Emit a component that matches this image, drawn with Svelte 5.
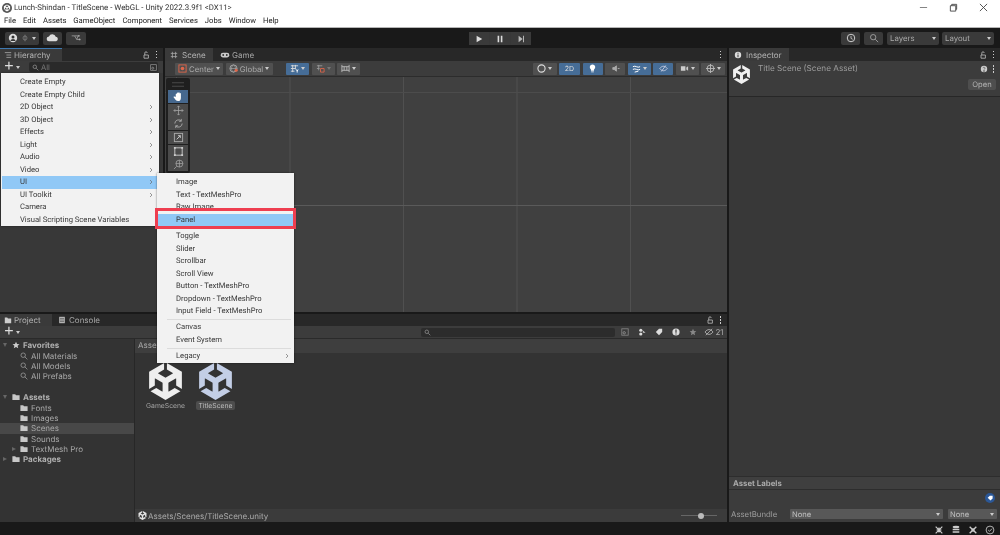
<script>
  const unity = "m12.9288 4.2939 3.7997 2.1929c.1366.077.1415.2905 0 .3675l-4.515 2.6076a.4192.4192 0 0 1-.4246 0L7.274 6.8543c-.1415-.077-.1415-.2905 0-.3675l3.7972-2.1929V0L1.3758 5.5977V16.793l3.7-2.1358v-4.3884c-.0025-.1585.1794-.2733.3159-.1843l4.515 2.6076a.4316.4316 0 0 1 .2123.3675v5.2124c.0049.1585-.1794.2733-.3184.1843l-3.7972-2.1929-3.7 2.1358 9.6957 5.5977 9.6957-5.5977-3.7-2.1358-3.7972 2.1929c-.1366.0842-.3233-.0234-.3184-.1843v-5.2124c0-.1515.0843-.2921.2123-.3675l4.5151-2.6076c.1342-.0843.3208.0258.3159.1843v4.3884l3.7 2.1358V5.5977L12.9288 0Z";
  const menus = ["File","Edit","Assets","GameObject","Component","Services","Jobs","Window","Help"];
  const hierarchy = [
    ["Create Empty",0],["Create Empty Child",0],["2D Object",1],["3D Object",1],["Effects",1],["Light",1],["Audio",1],["Video",1],["UI",1,1],["UI Toolkit",1],["Camera",0],["Visual Scripting Scene Variables",0]
  ];
  const tree = [
    {t:"Favorites",k:"head star"},{t:"All Materials",k:"search"},{t:"All Models",k:"search"},{t:"All Prefabs",k:"search"},{k:"gap"},
    {t:"Assets",k:"head expanded"},{t:"Fonts",k:"folder"},{t:"Images",k:"folder"},{t:"Scenes",k:"folder sel"},{t:"Sounds",k:"folder"},{t:"TextMesh Pro",k:"folder arrow"},{t:"Packages",k:"head closed"}
  ];
</script>

<div class="app">
  <header class="title">
    <svg class="appicon" viewBox="0 0 24 24"><circle cx="12" cy="12" r="12" fill="#555"/><path d={unity} fill="#fff" transform="translate(3.6 3.6) scale(.7)"/></svg>
    <span>Lunch-Shindan - TitleScene - WebGL - Unity 2022.3.9f1 &lt;DX11&gt;</span>
    <div class="winctl">
      <svg viewBox="0 0 10 10"><path d="M1 5h8" stroke="#777" fill="none"/></svg>
      <svg viewBox="0 0 10 10"><path d="M1.5 3h6v6h-6zM3 3V1.5h5.500V7H7.500" stroke="#444" fill="none"/></svg>
      <svg viewBox="0 0 10 10"><path d="M1 1l8 8M9 1l-8 8" stroke="#444" fill="none"/></svg>
    </div>
  </header>
  <nav class="menubar">{#each menus as m}<span>{m}</span>{/each}</nav>

  <div class="toolbar">
    <div class="tleft">
      <div class="tb acct">
        <svg viewBox="0 0 12 12"><circle cx="6" cy="6" r="5" fill="#ddd"/><circle cx="6" cy="4.700" r="1.800" fill="#333"/><path d="M2.800 9.500a3.300 3 0 0 1 6.400 0z" fill="#333"/></svg>
        <svg class="dim" viewBox="0 0 12 12"><circle cx="6" cy="6" r="3" fill="none" stroke="#888"/><path d="M6 1v10" stroke="#888"/></svg>
        <i class="caret"></i>
      </div>
      <div class="tb cloud"><svg viewBox="0 0 16 10"><path d="M4 9a3 3 0 0 1-.4-6A4.500 4.500 0 0 1 12 3.500 2.800 2.800 0 0 1 12.500 9z" fill="#ddd"/></svg></div>
      <div class="tb collab"><svg viewBox="0 0 14 10"><path d="M1 2h4l3 5h5M5 2h5M8 7l2-5" stroke="#aaa" fill="none"/><circle cx="11" cy="2" r="1.300" fill="#aaa"/><circle cx="12" cy="7" r="1.300" fill="#aaa"/></svg></div>
    </div>
    <div class="play">
      <span><svg viewBox="0 0 10 10"><path d="M2 1l7 4-7 4z" fill="#ddd"/></svg></span>
      <span><svg viewBox="0 0 10 10"><path d="M2 1h2v8H2zM6 1h2v8H6z" fill="#ddd"/></svg></span>
      <span><svg viewBox="0 0 10 10"><path d="M2 1l5 4-5 4zM7.500 1h1.200v8H7.500z" fill="#bbb"/></svg></span>
    </div>
    <div class="tright">
      <div class="tb hist"><svg viewBox="0 0 12 12"><circle cx="6" cy="6" r="4.500" fill="none" stroke="#ccc" stroke-width="1.200"/><path d="M6 3.500V6.500L8 7.500" stroke="#ccc" fill="none"/></svg></div>
      <div class="tb srch"><svg viewBox="0 0 12 12"><circle cx="5" cy="5" r="3.200" fill="none" stroke="#aaa"/><path d="M7.500 7.500L11 11" stroke="#aaa"/></svg></div>
      <div class="tb drop layers">Layers<i class="caret"></i></div>
      <div class="tb drop layout">Layout<i class="caret"></i></div>
    </div>
  </div>

  <div class="workspace">
    <div class="leftcol">
      <div class="toprow">
        <section class="hier">
          <div class="tabs">
            <div class="tab active blue"><svg viewBox="0 0 10 10"><path d="M1 2h8M3 5h6M3 8h6" stroke="#aaa"/></svg>Hierarchy</div>
            <div class="tabtools"><svg viewBox="0 0 10 10"><path d="M2.500 5h5.500v4H2.500zM3.500 5V2.500a1.500 1.500 0 0 1 3 0" stroke="#bbb" fill="none"/></svg><b class="dots"></b></div>
          </div>
          <div class="hbar">
            <span class="plus">+</span><i class="caret"></i>
            <div class="hsearch"><svg viewBox="0 0 10 10"><circle cx="4" cy="4" r="2.500" fill="none" stroke="#999"/><path d="M6 6l3 3" stroke="#999"/></svg>All
              <svg class="end" viewBox="0 0 10 10"><rect x="1" y="1" width="8" height="8" fill="none" stroke="#999"/><circle cx="4" cy="6" r="1.500" fill="none" stroke="#999"/></svg>
            </div>
          </div>
          <div class="hbody"></div>
        </section>

        <section class="scene">
          <div class="tabs">
            <div class="tab active sc"><svg viewBox="0 0 10 10"><path d="M3 1v8M7 1v8M1 3h8M1 7h8" stroke="#aaa"/></svg>Scene</div>
            <div class="tab gm"><svg viewBox="0 0 14 10"><rect x="1" y="2" width="12" height="6.500" rx="3" fill="#ccc"/><circle cx="4.500" cy="5" r="1.300" fill="#333"/><circle cx="9.500" cy="5" r="1.300" fill="#333"/></svg>Game</div>
            <div class="tabtools"><b class="dots"></b></div>
          </div>
          <div class="sbar">
            <div class="sb w-center"><svg viewBox="0 0 10 10"><rect x="1" y="1" width="8" height="8" fill="none" stroke="#e0664a"/><circle cx="5" cy="5" r="2" fill="#e0664a"/></svg>Center<i class="caret"></i></div>
            <div class="sb w-global"><svg viewBox="0 0 10 10"><circle cx="5" cy="5" r="4" fill="none" stroke="#aaa"/><path d="M1 5h8M5 1c-3 2-3 6 0 8M5 1c3 2 3 6 0 8" stroke="#aaa" fill="none" stroke-width=".7"/><circle cx="8" cy="7" r="1.700" fill="#e0664a"/></svg>Global<i class="caret"></i></div>
            <div class="sb w-snap on first"><svg viewBox="0 0 10 10"><path d="M1 2h8M1 5h5M1 8h4M3 1v8M6 1v5" stroke="#ddd"/><path d="M7 6l1 2 1-2M8 8v1.500" stroke="#fff" fill="none"/></svg><i class="caret"></i></div>
            <div class="sb w-snap2"><svg viewBox="0 0 10 10"><path d="M1 2h6M1 5h3M3 1v6" stroke="#999"/><path d="M5 5h4v4H5z" fill="none" stroke="#d9644a"/></svg><i class="caret dimc"></i></div>
            <div class="sb w-snap2"><svg viewBox="0 0 10 10"><path d="M1 1v8M9 1v8M1 3h8M1 7h8M3.500 3v4M6.500 3v4" stroke="#bbb"/></svg><i class="caret"></i></div>
            <div class="spacer"></div>
            <div class="sb w-wide"><svg viewBox="0 0 10 10"><circle cx="5" cy="5" r="4" fill="none" stroke="#ddd" stroke-width="1.200"/></svg><i class="caret"></i></div>
            <div class="sb w-2d on">2D</div>
            <div class="sb w-btn on"><svg viewBox="0 0 10 10"><path d="M5 .5a3 3 0 0 1 1.700 5.500v1.500H3.300V6A3 3 0 0 1 5 .5zM3.500 8.300h3v1h-3z" fill="#fff"/></svg></div>
            <div class="sb w-btn"><svg viewBox="0 0 10 10"><path d="M2 4h1.500L6 2v6L3.500 6H2zM7.500 5h2" stroke="#aaa" fill="#aaa"/></svg></div>
            <div class="sb w-fx on"><svg viewBox="0 0 10 10"><path d="M1 3c3-2 5 2 8 0M1 6c3-2 5 2 8 0M3 9l4-1" stroke="#fff" fill="none" stroke-width="1.100"/></svg><i class="caret"></i></div>
            <div class="sb w-btn on"><svg viewBox="0 0 12 10"><path d="M1 5c3-4 7-4 10 0-3 4-7 4-10 0zM3 9L9 1" stroke="#dde" fill="none"/></svg></div>
            <div class="sb w-fx"><svg viewBox="0 0 10 10"><path d="M1 2.500h5v5H1zM7 4l2-1.500v5L7 6z" fill="#ccc"/></svg><i class="caret"></i></div>
            <div class="sb w-wide"><svg viewBox="0 0 10 10"><circle cx="5" cy="5" r="3.800" fill="none" stroke="#bbb"/><path d="M0 5h10M5 0v10" stroke="#bbb"/></svg><i class="caret"></i></div>
          </div>
          <div class="view">
            <div class="tools">
              <div class="grip"></div>
              <div class="tool on"><svg viewBox="0 0 12 12"><path d="M3 6V3.500a.7.7 0 0 1 1.400 0V2.300a.7.7 0 0 1 1.400 0V2a.7.7 0 0 1 1.400 0v1a.7.7 0 0 1 1.400 0v4.500c0 2-1 3.500-3 3.500-2.500 0-3-2-4.800-4-.6-1 .8-1.500 1.700-.500z" fill="#fff"/></svg></div>
              <div class="tool"><svg viewBox="0 0 12 12"><path d="M6 1v10M1 6h10M4.500 2.500L6 1l1.500 1.500M4.500 9.500L6 11l1.500-1.500M2.500 4.500L1 6l1.500 1.500M9.500 4.500L11 6 9.500 7.500" stroke="#aaa" fill="none" stroke-width=".8"/></svg></div>
              <div class="tool"><svg viewBox="0 0 12 12"><path d="M2 6a4 4 0 0 1 7-2.600M10 6a4 4 0 0 1-7 2.600M9 1v2.500H6.500M3 11V8.500h2.500" stroke="#aaa" fill="none"/></svg></div>
              <div class="tool"><svg viewBox="0 0 12 12"><rect x="1.500" y="1.500" width="9" height="9" fill="none" stroke="#aaa"/><path d="M4 8l4-4M5.500 4H8v2.500" stroke="#ccc" fill="none"/></svg></div>
              <div class="tool"><svg viewBox="0 0 12 12"><rect x="2" y="2" width="8" height="8" fill="none" stroke="#ccc"/><path d="M1 1h2v2H1zM9 1h2v2H9zM1 9h2v2H1zM9 9h2v2H9z" fill="#ccc"/></svg></div>
              <div class="tool"><svg viewBox="0 0 12 12"><circle cx="7" cy="5" r="3.800" fill="none" stroke="#aaa" stroke-width=".8"/><path d="M3.200 5h7.600M7 1.200v7.600M1 11l3-3" stroke="#aaa" stroke-width=".8"/></svg></div>
            </div>
          </div>
        </section>
      </div>

      <section class="project">
        <div class="tabs ptabs">
          <div class="tab active pj"><svg viewBox="0 0 10 10"><path d="M1 2h3l1 1h4v6H1z" fill="#ccc"/></svg>Project</div>
          <div class="tab cs"><svg viewBox="0 0 10 10"><rect x="1.500" y="1" width="7" height="8" fill="#bbb"/><path d="M2.500 3h5M2.500 5h5M2.500 7h5" stroke="#333" stroke-width=".7"/></svg>Console</div>
          <div class="tabtools"><svg viewBox="0 0 10 10"><path d="M2.500 5h5.500v4H2.500zM3.500 5V2.500a1.500 1.500 0 0 1 3 0" stroke="#bbb" fill="none"/></svg><b class="dots"></b></div>
        </div>
        <div class="pbar">
          <span class="plus">+</span><i class="caret"></i>
          <div class="psearch"><svg viewBox="0 0 10 10"><circle cx="4" cy="4" r="2.500" fill="none" stroke="#999"/><path d="M6 6l3 3" stroke="#999"/></svg></div>
          <div class="pi"><svg viewBox="0 0 10 10"><rect x="1" y="1" width="8" height="8" fill="none" stroke="#888"/><circle cx="4" cy="6" r="1.500" fill="none" stroke="#999"/></svg></div>
          <div class="pi"><svg viewBox="0 0 10 10"><circle cx="3.500" cy="2.800" r="2" fill="#ddd"/><circle cx="3.500" cy="7.500" r="2" fill="#ddd"/><path d="M6 3l3.500 3H6z" fill="#ccc"/></svg></div>
          <div class="pi"><svg viewBox="0 0 10 10"><path d="M1 5l4-4h4v4l-4 4z" fill="#ddd"/></svg></div>
          <div class="pi"><svg viewBox="0 0 10 10"><circle cx="5" cy="5" r="4.500" fill="#ddd"/><path d="M4.300 2h1.400v4H4.300zM4.300 6.800h1.400v1.400H4.300z" fill="#333"/></svg></div>
          <div class="pi"><svg viewBox="0 0 10 10"><path d="M5 1l1.200 2.800 3 .2-2.300 2 .7 3L5 7.400 2.400 9l.7-3L.8 4l3-.2z" fill="#888"/></svg></div>
          <div class="pi last"><svg viewBox="0 0 12 10"><path d="M1 5c3-4 7-4 10 0-3 4-7 4-10 0zM2 9L10 1" stroke="#bbb" fill="none"/></svg>21</div>
        </div>
        <div class="pbody">
          <div class="ptree">
            {#each tree as row}
              <div class="row {row.k}">
                {#if row.k.includes("head") || row.k.includes("arrow")}
                  <i class="tri" class:down={row.k.includes("star") || row.k.includes("expanded")}></i>
                {/if}
                {#if row.k.includes("star")}
                  <svg viewBox="0 0 10 10"><path d="M5 .8l1.300 2.900 3.100.3-2.400 2 .8 3.100L5 7.500 2.200 9.100 3 6 .6 4l3.100-.3z" fill="#ccc"/></svg>
                {:else if row.k.includes("search")}
                  <svg viewBox="0 0 10 10"><circle cx="4" cy="4" r="2.800" fill="none" stroke="#999"/><path d="M6 6l3.200 3.200" stroke="#999"/></svg>
                {:else if row.k !== "gap"}
                  <svg viewBox="0 0 10 10"><path d="M.5 1.500h3.500l1 1.200h4.500v6H.5z" fill="#c8c8c8"/></svg>
                {/if}
                {#if row.t}<span>{row.t}</span>{/if}
              </div>
            {/each}
          </div>
          <div class="pmain">
            <div class="crumb">Assets</div>
            <div class="assets">
              <div class="asset"><svg viewBox="0 0 24 24"><path d={unity} fill="#eee"/></svg><span>GameScene</span></div>
              <div class="asset sel"><svg viewBox="0 0 24 24"><path d={unity} fill="#c3cee6"/></svg><span>TitleScene</span></div>
            </div>
            <div class="pathbar"><svg viewBox="0 0 24 24"><path d={unity} fill="#e4e4e4"/></svg>Assets/Scenes/TitleScene.unity
              <div class="slider"><b></b></div>
            </div>
          </div>
        </div>
      </section>
    </div>

    <aside class="inspector">
      <div class="tabs">
        <div class="tab active ins"><svg viewBox="0 0 10 10"><circle cx="5" cy="5" r="4" fill="#ddd"/><path d="M4.400 4.300h1.200v3.500H4.400zM4.400 2.300h1.200v1.200H4.400z" fill="#333"/></svg>Inspector</div>
        <div class="tabtools"><svg viewBox="0 0 10 10"><path d="M2.500 5h5.500v4H2.500zM3.500 5V2.500a1.500 1.500 0 0 1 3 0" stroke="#bbb" fill="none"/></svg><b class="dots"></b></div>
      </div>
      <div class="ihead">
        <svg class="logo" viewBox="0 0 24 24"><path d={unity} fill="#f0f0f0"/></svg>
        <div class="ititle">Title Scene (Scene Asset)</div>
        <div class="ihelp"><svg viewBox="0 0 10 10"><circle cx="5" cy="5" r="4" fill="#ccc"/><path d="M3.800 4a1.200 1.200 0 1 1 1.800 1c-.5.300-.6.500-.6 1M4.500 7h1v1h-1z" stroke="#333" stroke-width=".7" fill="none"/></svg><b class="dots"></b></div>
        <div class="openbtn">Open</div>
      </div>
      <div class="ibody"></div>
      <div class="labels">Asset Labels</div>
      <div class="lbody">
        <div class="tagbtn"><svg viewBox="0 0 10 10"><path d="M1 4l3-3h4v4L5 8z" fill="#fff"/></svg></div>
        <div class="bundle">
          <span class="blabel">AssetBundle</span>
          <div class="bsel wide">None<i class="caret"></i></div>
          <div class="bsel">None<i class="caret"></i></div>
        </div>
      </div>
    </aside>
  </div>

  <footer class="status">
    <svg viewBox="0 0 12 12"><path d="M2 2l8 8M10 2l-8 8M3 6h6M6 3v6" stroke="#ccc" stroke-width="1.400"/></svg>
    <svg viewBox="0 0 12 12"><ellipse cx="6" cy="2.500" rx="4" ry="1.500" fill="#ccc"/><path d="M2 5.500h8M2 8.500h8" stroke="#ccc" stroke-width="1.800"/></svg>
    <svg viewBox="0 0 12 12"><path d="M2 2l8 8M10 2l-8 8" stroke="#ccc" stroke-width="1.600"/><circle cx="6" cy="6" r="2" fill="#ccc"/></svg>
    <svg viewBox="0 0 12 12"><circle cx="6" cy="6" r="4.700" fill="none" stroke="#ccc"/><path d="M3.800 6l1.600 1.600 3-3.200" stroke="#ccc" fill="none"/></svg>
  </footer>

  <div class="menu">
    {#each hierarchy as [label, sub, active]}
      <div class="item" class:active>{label}{#if sub}<svg class="chev" viewBox="0 0 6 8"><path d="M1.500 1l3 3-3 3" fill="none" stroke="#666"/></svg>{/if}</div>
    {/each}
  </div>

  <div class="menu submenu">
    <div class="item">Image</div>
    <div class="item">Text - TextMeshPro</div>
    <div class="item">Raw Image</div>
    <div class="item panel">Panel</div>
    <div class="sep"></div>
    <div class="item">Toggle</div>
    <div class="item">Slider</div>
    <div class="item">Scrollbar</div>
    <div class="item">Scroll View</div>
    <div class="item">Button - TextMeshPro</div>
    <div class="item">Dropdown - TextMeshPro</div>
    <div class="item">Input Field - TextMeshPro</div>
    <div class="sep line"></div>
    <div class="item">Canvas</div>
    <div class="item">Event System</div>
    <div class="sep line"></div>
    <div class="item">Legacy<svg class="chev" viewBox="0 0 6 8"><path d="M1.500 1l3 3-3 3" fill="none" stroke="#666"/></svg></div>
    <div class="redbox"></div>
  </div>
</div>

<style>
  :global(body) { margin: 0; background: #191919; }
  .app {
    position: relative; width: 1000px; height: 535px; overflow: hidden;
    display: flex; flex-direction: column;
    font-family: Inter, "Liberation Sans", sans-serif; font-size: 7.600px; color: #bdbdbd;
    background: #191919; filter: blur(.3px); text-rendering: geometricPrecision;
  }
  svg { display: block; flex: none; }
  .title { height: 15px; background: #fff; display: flex; align-items: center; color: #333; font-family: Roboto, sans-serif; font-size: 7.870px; padding-left: 2px; position: relative; }
  .appicon { width: 10px; height: 10px; margin-right: 2px; }
  .winctl { margin-left: auto; display: flex; gap: 21px; padding-right: 12px; }
  .winctl svg { width: 9px; height: 9px; }
  .menubar { height: 12px; background: #fff; border-bottom: 1px solid #b5b5b5; display: flex; gap: 7px; padding-left: 4px; color: #222; font-family: Roboto, sans-serif; font-size: 7.650px; line-height: 12px; }

  .toolbar { height: 20px; display: flex; align-items: center; position: relative; background: #191919; }
  .tleft { display: flex; gap: 4px; padding-left: 5px; }
  .tb { height: 13px; background: #3a3a3a; border-radius: 2px; display: flex; align-items: center; justify-content: center; box-sizing: border-box; }
  .tb svg { width: 10px; height: 10px; }
  .acct { width: 34px; gap: 3px; }
  .acct .dim { width: 8px; height: 8px; }
  .cloud { width: 19px; } .cloud svg { width: 13px; }
  .collab { width: 20px; }
  .play { position: absolute; left: 469px; top: 4px; height: 13px; width: 62px; display: flex; background: #383838; gap: 1px; }
  .play span { flex: 1; display: flex; align-items: center; justify-content: center; background: #3a3a3a; }
  .play svg { width: 8px; height: 8px; }
  .tright { margin-left: auto; display: flex; gap: 4px; padding-right: 6px; }
  .hist, .srch { width: 19px; }
  .drop { width: 52px; justify-content: space-between; padding: 0 3px 0 3px; color: #aaa; font-size: 7.800px; }
  .layers { margin-right: -1px; }
  .caret { display: inline-block; width: 0; height: 0; border-left: 2.500px solid transparent; border-right: 2.500px solid transparent; border-top: 3px solid #ccc; flex: none; }
  .dimc { border-top-color: #777; }

  .workspace { height: 474px; display: flex; background: #191919; }
  .leftcol { width: 727px; display: flex; flex-direction: column; gap: 2px; }
  .toprow { height: 264px; display: flex; gap: 2px; }
  .tabs { height: 13px; background: #282828; display: flex; align-items: stretch; flex: none; }
  .ptabs { height: 12px; }
  .tab { display: flex; align-items: center; gap: 2px; padding: 0 4px; color: #a8a8a8; font-size: 8px; }
  .tab svg { width: 8px; height: 8px; }
  .tab.active { background: #3a3a3a; color: #b4b4b4; }
  .tab.blue { box-shadow: inset 0 1px 0 #3f79b0; width: 62px; box-sizing: border-box; }
  .tab.sc { width: 48px; box-sizing: border-box; padding-left: 5px; gap: 4px; }
  .tab.gm { padding-left: 7px; } .gm svg { width: 10px; }
  .tab.pj { width: 52px; box-sizing: border-box; padding-left: 4px; }
  .tab.cs { padding-left: 6px; gap: 3px; }
  .tab.ins { width: 60px; box-sizing: border-box; padding-left: 5px; gap: 4px; }
  .tabtools { margin-left: auto; display: flex; align-items: center; gap: 6px; padding-right: 5px; }
  .tabtools svg { width: 8px; height: 8px; }
  .dots { display: block; width: 1.500px; height: 1.500px; background: #ccc; box-shadow: 0 -3px 0 #ccc, 0 3px 0 #ccc; margin-right: 1px; }

  .hier { width: 163px; display: flex; flex-direction: column; background: #383838; }
  .hbar { height: 12px; display: flex; align-items: center; gap: 2px; padding-left: 4px; background: #3c3c3c; }
  .plus { width: 10px; font-size: 16px; line-height: 10px; color: #ddd; font-family: "Liberation Sans", sans-serif; text-align: center; }
  .hsearch { margin-left: 7px; width: 129px; height: 10px; background: #2a2a2a; border-radius: 2px; display: flex; align-items: center; gap: 2px; padding-left: 3px; box-sizing: border-box; color: #777; }
  .hsearch svg { width: 7px; height: 7px; }
  .hsearch .end { margin-left: auto; margin-right: 1px; }
  .hbody { flex: 1; background: #383838; }

  .scene { flex: 1; display: flex; flex-direction: column; min-width: 0; background: #3c3c3c; }
  .sbar { height: 16px; display: flex; align-items: center; background: #3c3c3c; padding-left: 10px; padding-right: 2px; gap: 2.500px; border-bottom: 1px solid #2c2c2c; box-sizing: border-box; }
  .sb { height: 12px; background: #505050; display: flex; align-items: center; justify-content: center; gap: 2px; border-radius: 1px; color: #aaa; font-size: 7.800px; box-sizing: border-box; }
  .sb svg { width: 9px; height: 9px; }
  .sb.on { background: #466d97; color: #ddd; }
  .w-center { width: 48px; } .w-global { width: 47px; }
  .w-snap { width: 23px; } .first { margin-left: 11px; }
  .w-snap2 { width: 23px; }
  .w-wide { width: 24px; } .w-2d { width: 21px; font-size: 7px; } .w-btn { width: 20px; } .w-fx { width: 23px; }
  .spacer { flex: 1; }
  .view {
    flex: 1; position: relative;
    background-color: #404040;
    background-image:
      linear-gradient(#5a5a5a, #5a5a5a), linear-gradient(#4c4c4c, #4c4c4c),
      linear-gradient(90deg, #505050 1px, transparent 1px);
    background-size: 100% 1px, 100% 1px, 113.500px 100%;
    background-position: 0 128px, 0 15px, 11px 0;
    background-repeat: no-repeat, no-repeat, repeat-x;
  }
  .tools { position: absolute; left: 1px; top: 1px; width: 24px; height: 95px; background: #1f1f1f; border-radius: 2px; padding: 2px; box-sizing: border-box; }
  .grip { height: 9px; width: 12px; margin: 0 auto 1px; box-sizing: border-box; border-top: 1px solid #888; border-bottom: 1px solid #888; transform: scaleY(.4); }
  .tool { height: 13px; margin: 0 0 .7px; background: #4b4b4b; display: flex; align-items: center; justify-content: center; }
  .tool svg { width: 11px; height: 11px; }
  .tool.on { background: #46688e; }

  .project { height: 208px; display: flex; flex-direction: column; background: #333; }
  .pbar { height: 13px; display: flex; align-items: center; gap: 2px; padding: 0 1px 0 4px; background: #3c3c3c; border-bottom: 1px solid #2a2a2a; box-sizing: border-box; flex: none; }
  .psearch { margin-left: 399px; flex: 1; height: 9px; background: #2c2c2c; border-radius: 2px; padding-left: 3px; display: flex; align-items: center; }
  .psearch svg { width: 7px; height: 7px; }
  .pi { width: 15px; display: flex; align-items: center; justify-content: center; color: #aaa; gap: 1px; }
  .pi svg { width: 8px; height: 8px; }
  .pi.last { width: 24px; font-size: 8px; }
  .pi.last svg { width: 10px; }
  .pbody { flex: 1; display: flex; min-height: 0; }
  .ptree { width: 135px; border-right: 1px solid #272727; padding-top: 1px; box-sizing: border-box; background: #333; }
  .row { height: 10.400px; display: flex; align-items: center; gap: 3px; padding-left: 20px; color: #a8a8a8; font-size: 8px; position: relative; }
  .row svg { width: 8px; height: 8px; }
  .row.head { padding-left: 12px; font-weight: 700; color: #b0b0b0; gap: 3px; }
  .row.sel { background: #484848; }
  .tri { position: absolute; left: 3px; top: 3px; width: 0; height: 0; border-top: 2.500px solid transparent; border-bottom: 2.500px solid transparent; border-left: 4px solid #666; }
  .tri.down { border-left: 2.500px solid transparent; border-right: 2.500px solid transparent; border-top: 4px solid #666; border-bottom: 0; left: 3px; }
  .row.arrow .tri { left: 12px; }
  .pmain { flex: 1; display: flex; flex-direction: column; background: #333; min-width: 0; }
  .crumb { height: 14px; background: #3e3e3e; line-height: 13px; padding-left: 3px; font-size: 8px; color: #aaa; }
  .assets { flex: 1; display: flex; gap: 13px; padding: 10px 0 0 12px; align-items: flex-start; }
  .asset { width: 37px; display: flex; flex-direction: column; align-items: center; gap: 2px; font-size: 6.800px; color: #a5a5a5; }
  .asset svg { width: 37px; height: 37px; margin-bottom: -1px; }
  .asset.sel span { background: #4d4d4d; padding: 0 2px; border-radius: 2px; color: #bbb; }
  .pathbar { height: 13px; background: #3b3b3b; display: flex; align-items: center; gap: 1px; padding-left: 3px; font-size: 8px; color: #aaa; flex: none; }
  .pathbar svg { width: 9px; height: 9px; }
  .slider { margin-left: auto; margin-right: 10px; width: 36px; height: 1px; background: #666; position: relative; }
  .slider b { position: absolute; left: 17px; top: -2.500px; width: 6px; height: 6px; border-radius: 50%; background: #bbb; }

  .inspector { flex: 1; margin-left: 2px; display: flex; flex-direction: column; background: #383838; }
  .ihead { height: 36px; position: relative; background: #3c3c3c; border-bottom: 1px solid #272727; box-sizing: border-box; flex: none; }
  .logo { position: absolute; left: 3px; top: 4px; width: 19px; height: 19px; }
  .ititle { position: absolute; left: 29px; top: 2px; font-size: 8.200px; color: #9c9c9c; }
  .ihelp { position: absolute; right: 5px; top: 4px; display: flex; gap: 5px; align-items: center; }
  .ihelp svg { width: 8px; height: 8px; }
  .openbtn { position: absolute; right: 4px; top: 18px; width: 28px; height: 11px; line-height: 11px; text-align: center; background: #4e4e4e; border-radius: 2px; color: #b5b5b5; }
  .ibody { flex: 1; background: #383838; }
  .labels { height: 14px; background: #3f3f3f; border-top: 1px solid #2d2d2d; border-bottom: 1px solid #2d2d2d; box-sizing: border-box; line-height: 12px; padding-left: 4px; font-weight: 700; font-size: 7.800px; color: #aaa; flex: none; }
  .lbody { height: 32px; background: #3c3c3c; flex: none; }
  .tagbtn { margin: 3px 5px 0 auto; width: 10px; height: 10px; border-radius: 50%; background: #2b5796; display: flex; align-items: center; justify-content: center; }
  .tagbtn svg { width: 7px; height: 7px; }
  .bundle { margin-top: 6px; display: flex; align-items: center; padding-left: 2px; }
  .blabel { width: 59px; flex: none; color: #9c9c9c; font-size: 7.800px; }
  .bsel { height: 10px; width: 49px; background: #585858; display: flex; align-items: center; justify-content: space-between; padding: 0 3px 0 2px; box-sizing: border-box; color: #c0c0c0; border-radius: 1px; margin-left: 5px; flex: none; }
  .bsel.wide { width: 153px; margin-left: 0; }

  .status { height: 13px; display: flex; justify-content: flex-end; align-items: center; gap: 7px; padding: 2px 5px 0 0; box-sizing: border-box; background: #191919; }
  .status svg { width: 10px; height: 10px; }

  .menu { position: absolute; left: 1px; top: 73px; width: 158px; box-sizing: border-box; height: 153px; background: #f2f2f2; box-shadow: 0 0 2px rgba(0,0,0,.5); padding-top: 3.200px; color: #383838; font-family: Roboto, sans-serif; font-size: 7.650px; }
  .item { height: 12.500px; line-height: 12.500px; padding-left: 18px; position: relative; margin: 0 1px; }
  .item.active, .item.panel { background: #90c8f6; }
  .chev { position: absolute; right: 5px; top: 3px; width: 4px; height: 6px; }
  .submenu { left: 157px; top: 173px; width: 137px; height: 190px; }
  .submenu .chev { right: 4px; }
  .sep { height: 4px; }
  .sep.line { position: relative; height: 3.500px; }
  .sep.line::after { content: ""; position: absolute; left: 10px; right: 3px; top: 1.500px; height: 1px; background: #dcdcdc; }
  .redbox { position: absolute; left: -2px; right: -2px; top: 35px; height: 21px; border: 3px solid #ee3e50; box-sizing: border-box; }
</style>
